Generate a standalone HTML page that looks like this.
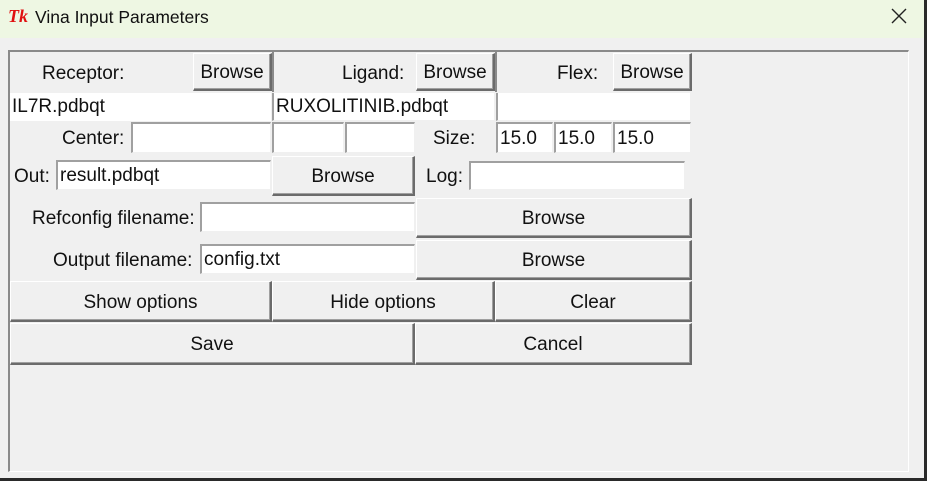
<!DOCTYPE html>
<html><head><style>
*{margin:0;padding:0;box-sizing:border-box}
body{width:927px;height:481px;background:#f0f0f0;font-family:"Liberation Sans",Arial,sans-serif;font-size:19px;color:#111;position:relative;overflow:hidden}
.a{position:absolute}
.tb{left:0;top:0;width:927px;height:38px;background:#eef7e3}
.btn{position:absolute;background:#f0f0f0;border-top:1px solid #fff;border-left:1px solid #fff;border-right:2px solid #6b6b6b;border-bottom:2px solid #6b6b6b;display:flex;align-items:center;justify-content:center;padding-top:3px;box-shadow:inset -1px -1px 0 #a0a0a0}
.en{position:absolute;background:#fff;border-top:2px solid #a0a0a0;border-left:2px solid #a0a0a0;border-right:1px solid #f0f0f0;border-bottom:1px solid #f0f0f0;padding-left:2px;line-height:28px;overflow:hidden;white-space:nowrap}
.lb{position:absolute;line-height:20px;white-space:nowrap}
</style></head><body>
<div class="a tb"></div>
<div class="a" style="left:8px;top:6px;color:#e01010;font-weight:bold;font-style:italic;font-size:18px;font-family:'Liberation Serif',serif">Tk</div>
<div class="lb" style="left:35px;top:7px;font-size:17.5px;color:#111">Vina Input Parameters</div>
<svg class="a" style="left:890px;top:7px" width="18" height="18"><path d="M2 2L16 16M16 2L2 16" stroke="#222" stroke-width="1.4"/></svg>
<div class="a" style="right:0;top:0;width:3px;height:481px;background:#2a2a2a"></div>
<div class="a" style="left:0;bottom:0;width:927px;height:3px;background:#2a2a2a"></div>
<div class="a" style="left:8px;top:50px;width:901px;height:422px;border-top:2px solid #8a8a8a;border-left:2px solid #8a8a8a;border-right:1px solid #fff;border-bottom:1px solid #fff"></div>

<div class="lb" style="left:42px;top:64px">Receptor:</div>
<div class="btn" style="left:193px;top:53px;width:79px;height:38px">Browse</div>
<div class="a" style="left:272px;top:52px;width:2px;height:40px;background:#8a8a8a"></div>
<div class="lb" style="left:342px;top:64px">Ligand:</div>
<div class="btn" style="left:416px;top:53px;width:79px;height:38px">Browse</div>
<div class="a" style="left:495px;top:52px;width:2px;height:40px;background:#8a8a8a"></div>
<div class="lb" style="left:557px;top:64px">Flex:</div>
<div class="btn" style="left:613px;top:53px;width:79px;height:38px">Browse</div>

<div class="en" style="left:10px;top:93px;width:261px;height:28px;border:none;padding-left:2px">IL7R.pdbqt</div>
<div class="en" style="left:272px;top:93px;width:223px;height:28px;border-top:none">RUXOLITINIB.pdbqt</div>
<div class="en" style="left:496px;top:93px;width:195px;height:28px;border-top:none"></div>

<div class="lb" style="left:62px;top:129px">Center:</div>
<div class="en" style="left:131px;top:122px;width:140px;height:31px"></div>
<div class="en" style="left:272px;top:122px;width:72px;height:31px"></div>
<div class="en" style="left:345px;top:122px;width:70px;height:31px"></div>
<div class="lb" style="left:433px;top:129px">Size:</div>
<div class="en" style="left:496px;top:122px;width:57px;height:31px;line-height:30px">15.0</div>
<div class="en" style="left:554px;top:122px;width:58px;height:31px;line-height:30px">15.0</div>
<div class="en" style="left:613px;top:122px;width:78px;height:31px;line-height:30px">15.0</div>

<div class="lb" style="left:14px;top:167px">Out:</div>
<div class="en" style="left:56px;top:160px;width:215px;height:30px">result.pdbqt</div>
<div class="btn" style="left:272px;top:156px;width:143px;height:40px">Browse</div>
<div class="lb" style="left:426px;top:167px">Log:</div>
<div class="en" style="left:469px;top:161px;width:216px;height:29px"></div>

<div class="lb" style="left:32px;top:209px">Refconfig filename:</div>
<div class="en" style="left:200px;top:202px;width:215px;height:30px"></div>
<div class="btn" style="left:416px;top:198px;width:276px;height:40px">Browse</div>

<div class="lb" style="left:53px;top:251px">Output filename:</div>
<div class="en" style="left:200px;top:244px;width:215px;height:30px">config.txt</div>
<div class="btn" style="left:416px;top:240px;width:276px;height:40px">Browse</div>

<div class="btn" style="left:10px;top:281px;width:262px;height:41px">Show options</div>
<div class="btn" style="left:272px;top:281px;width:223px;height:41px">Hide options</div>
<div class="btn" style="left:495px;top:281px;width:197px;height:41px">Clear</div>

<div class="btn" style="left:10px;top:323px;width:405px;height:42px">Save</div>
<div class="btn" style="left:415px;top:323px;width:277px;height:42px">Cancel</div>
</body></html>
